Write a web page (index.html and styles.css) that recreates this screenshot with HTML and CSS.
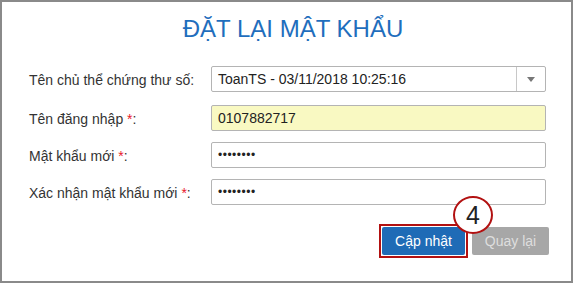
FILE: index.html
```html
<!DOCTYPE html>
<html lang="vi">
<head>
<meta charset="utf-8">
<title>Đặt lại mật khẩu</title>
<link rel="stylesheet" href="styles.css">
</head>
<body>
<div class="frame">
  <h1 class="title">ĐẶT LẠI MẬT KHẨU</h1>
  <div class="form">
    <div class="row row-first">
      <label class="label">Tên chủ thể chứng thư số:</label>
      <div class="select">
        <span class="select-value">ToanTS - 03/11/2018 10:25:16</span>
        <span class="select-arrow"><span class="caret"></span></span>
      </div>
    </div>
    <div class="row row-second">
      <label class="label">Tên đăng nhập <span class="req">*</span>:</label>
      <div class="input input-yellow">0107882717</div>
    </div>
    <div class="row">
      <label class="label">Mật khẩu mới <span class="req">*</span>:</label>
      <div class="input input-pass">••••••••</div>
    </div>
    <div class="row">
      <label class="label">Xác nhận mật khẩu mới <span class="req">*</span>:</label>
      <div class="input input-pass">••••••••</div>
    </div>
    <div class="actions">
      <div class="btn-wrap">
        <button class="btn btn-primary">Cập nhật</button>
        <span class="step">4</span>
      </div>
      <button class="btn btn-disabled">Quay lại</button>
    </div>
  </div>
</div>
</body>
</html>
```

FILE: styles.css
```css
* { box-sizing: border-box; }
html, body { margin: 0; padding: 0; background: #fff; }
body { font-family: "Liberation Sans", Arial, sans-serif; color: #333; }

.frame {
  width: 573px;
  height: 283px;
  border: 2px solid #8a8a8a;
  background: #fff;
}

.title {
  margin: 0;
  padding: 12px 0 0 13px;
  text-align: center;
  font-weight: normal;
  font-size: 24px;
  line-height: 30px;
  color: #1f6ebd;
}

.form {
  padding: 0 0 0 27px;
  margin-top: 22px;
}

.row {
  display: flex;
  align-items: center;
  height: 26px;
  margin-bottom: 11px;
}
.row-first { margin-bottom: 13px; }

.label {
  width: 182px;
  font-size: 14px;
  color: #333;
  padding-top: 2px;
}
.req { color: #e8192c; }

.select, .input {
  width: 335px;
  height: 26px;
  border: 1px solid #b4b4b4;
  border-radius: 2px;
  font-size: 14px;
  color: #222;
  display: flex;
  align-items: center;
  padding-left: 6px;
  background: #fff;
}
.select { padding-right: 0; }
.select-value { flex: 1; }
.select-arrow {
  width: 29px;
  height: 100%;
  border-left: 1px solid #c8c8c8;
  display: flex;
  align-items: center;
  justify-content: center;
}
.caret {
  width: 0; height: 0;
  border-left: 4px solid transparent;
  border-right: 4px solid transparent;
  border-top: 5px solid #777;
}
.input-yellow { background: #f9f9c2; }
.input-pass { font-size: 12px; letter-spacing: 0.5px; color: #222; }

.actions {
  display: flex;
  justify-content: flex-end;
  align-items: center;
  gap: 4px;
  padding-right: 22px;
  margin-top: 19px;
}
.btn-wrap {
  position: relative;
  border: 2px solid #b21111;
  padding: 1px;
  display: flex;
}
.btn {
  height: 28px;
  border: none;
  border-radius: 2px;
  font-family: "Liberation Sans", Arial, sans-serif;
  font-size: 14px;
  padding: 0;
}
.btn-primary {
  width: 83px;
  background: #1f6bb6;
  color: #fff;
}
.btn-disabled {
  width: 77px;
  background: #a7a7a7;
  color: #dedede;
}
.step {
  position: absolute;
  left: 72px;
  top: -30px;
  width: 40px;
  height: 38px;
  border: 2px solid #b21111;
  border-radius: 50%;
  background: #fff;
  color: #222;
  font-size: 25px;
  display: flex;
  align-items: center;
  justify-content: center;
}
```
